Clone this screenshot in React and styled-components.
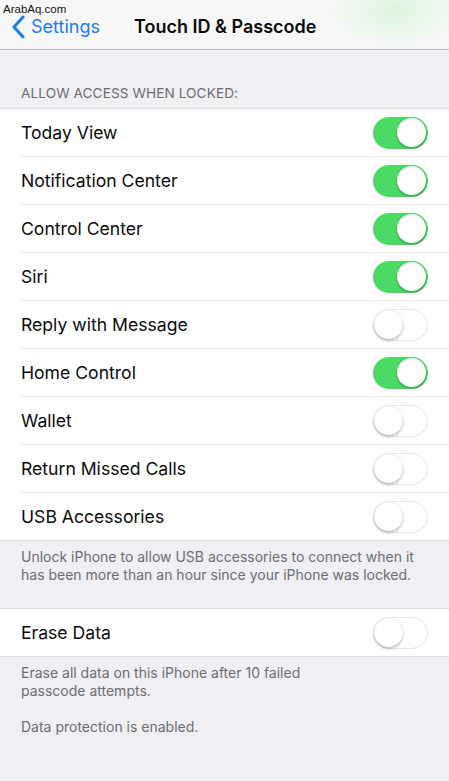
import React from "react";
import styled, { createGlobalStyle } from "styled-components";

const Global = createGlobalStyle`
  html, body { margin: 0; padding: 0; background: #efeff4; }
  body { font-family: Inter, "Liberation Sans", Arial, sans-serif; -webkit-font-smoothing: antialiased; }
`;

const Screen = styled.div`
  position: relative;
  width: 449px;
  min-height: 781px;
  background: #efeff4;
  overflow: hidden;
`;

const Watermark = styled.div`
  position: absolute;
  left: 3px;
  top: 3px;
  font-family: "Liberation Sans", Arial, sans-serif;
  font-size: 11.5px;
  color: #111;
  z-index: 2;
`;

const NavBar = styled.div`
  height: 50px;
  box-sizing: border-box;
  display: flex;
  align-items: center;
  border-bottom: 1px solid #b9b9bc;
  background:
    radial-gradient(ellipse 70px 40px at 395px 10px, rgba(200, 245, 205, 0.6), rgba(247,247,247,0) 100%),
    #f7f7f7;
  position: relative;
`;

const Back = styled.div`
  display: flex;
  align-items: center;
  gap: 6px;
  padding-left: 12px;
  color: #1a7cf5;
  font-size: 18px;
  margin-top: 4px;
`;

const Title = styled.div`
  position: absolute;
  left: 134px;
  top: 16px;
  font-size: 18px;
  font-weight: 600;
  color: #0b0b0b;
`;

const SectionHeader = styled.div`
  padding: 35px 21px 7px;
  font-size: 13.6px;
  color: #6d6d72;
  letter-spacing: 0.1px;
  line-height: 16px;
`;

const Group = styled.div`
  background: #fff;
  border-top: 1px solid #dcdce0;
  border-bottom: 1px solid #dcdce0;
`;

const Row = styled.div`
  height: 47px;
  display: flex;
  align-items: center;
  justify-content: space-between;
  margin-left: 21px;
  padding-right: 21px;
  border-top: ${(p) => (p.$first ? "none" : "1px solid #e3e3e6")};
  font-size: 17.6px;
  color: #0a0a0a;
`;

const Track = styled.div`
  width: 55px;
  height: 32px;
  box-sizing: border-box;
  border-radius: 16px;
  position: relative;
  background: ${(p) => (p.$on ? "#4cd864" : "#fff")};
  border: ${(p) => (p.$on ? "none" : "1.5px solid #e6e6e6")};
  display: flex;
  align-items: center;
  justify-content: ${(p) => (p.$on ? "flex-end" : "flex-start")};
  padding: ${(p) => (p.$on ? "0 2px" : "0")};
`;

const Knob = styled.div`
  width: 29px;
  height: 29px;
  border-radius: 50%;
  background: #fff;
  box-shadow: 0 2px 3px rgba(0, 0, 0, 0.22), 0 0 1px rgba(0,0,0,0.25);
`;

const Footer = styled.div`
  padding: 7px 21px ${(p) => (p.$bottom ? "26px" : "24px")};
  font-size: 14px;
  line-height: 18px;
  color: #6d6d72;
`;

const FooterPara = styled.p`
  margin: 0 0 18px;
  &:last-child { margin-bottom: 0; }
`;

const Switch = ({ on }) => (
  <Track $on={on}>
    <Knob />
  </Track>
);

const rows = [
  ["Today View", true],
  ["Notification Center", true],
  ["Control Center", true],
  ["Siri", true],
  ["Reply with Message", false],
  ["Home Control", true],
  ["Wallet", false],
  ["Return Missed Calls", false],
  ["USB Accessories", false],
];

export default function App() {
  return (
    <Screen>
      <Global />
      <Watermark>ArabAq.com</Watermark>
      <NavBar>
        <Back>
          <svg width="13" height="24" viewBox="0 0 13 24">
            <path d="M11 2 L2 12 L11 22" fill="none" stroke="#1a7cf5" strokeWidth="3" strokeLinecap="round" strokeLinejoin="round" />
          </svg>
          <span>Settings</span>
        </Back>
        <Title>Touch ID &amp; Passcode</Title>
      </NavBar>
      <SectionHeader>ALLOW ACCESS WHEN LOCKED:</SectionHeader>
      <Group>
        {rows.map(([label, on], i) => (
          <Row key={label} $first={i === 0}>
            <span>{label}</span>
            <Switch on={on} />
          </Row>
        ))}
      </Group>
      <Footer>
        <FooterPara>
          Unlock iPhone to allow USB accessories to connect when it
          <br />
          has been more than an hour since your iPhone was locked.
        </FooterPara>
      </Footer>
      <Group>
        <Row $first>
          <span>Erase Data</span>
          <Switch on={false} />
        </Row>
      </Group>
      <Footer $bottom>
        <FooterPara>
          Erase all data on this iPhone after 10 failed
          <br />
          passcode attempts.
        </FooterPara>
        <FooterPara>Data protection is enabled.</FooterPara>
      </Footer>
    </Screen>
  );
}
